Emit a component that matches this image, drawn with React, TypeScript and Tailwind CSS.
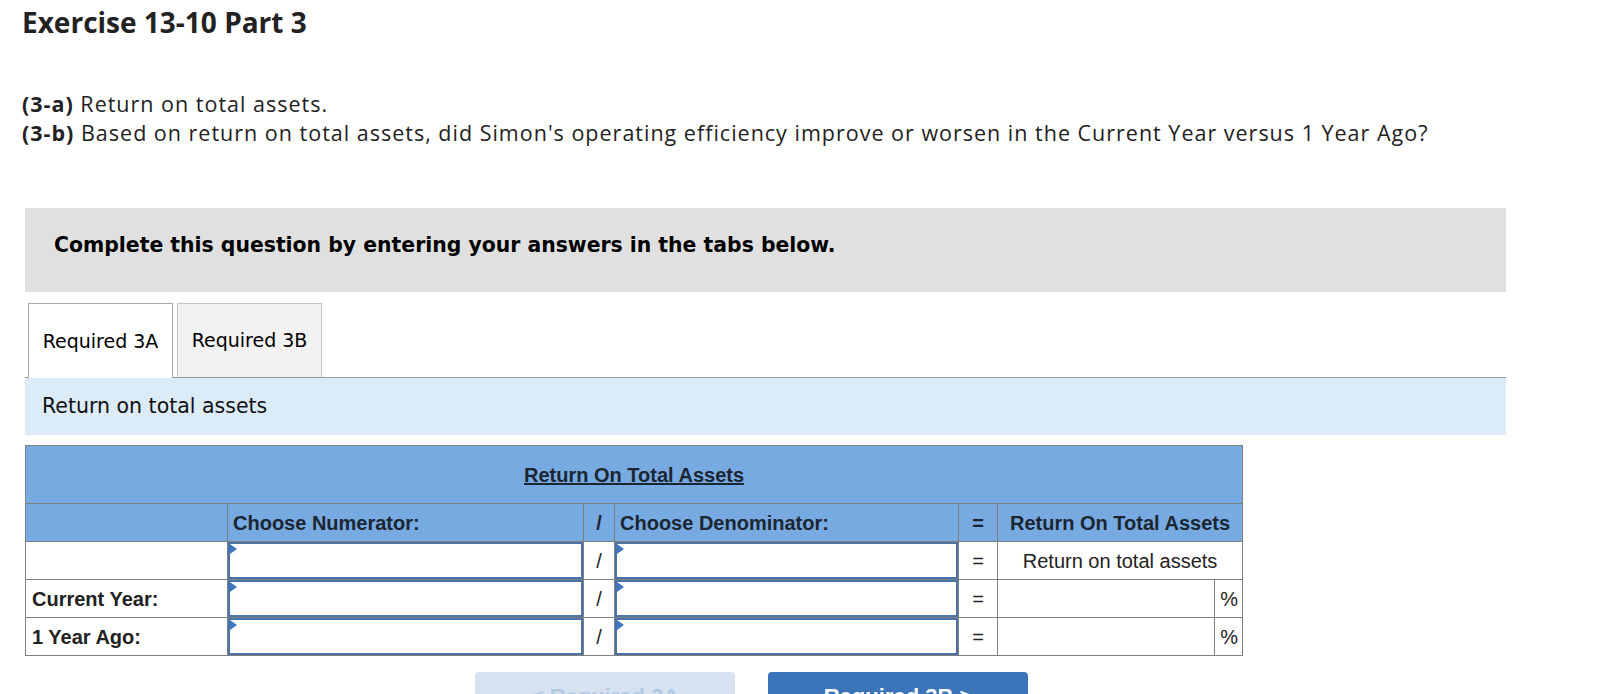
import React from 'react';

const sans = { fontFamily: '"Open Sans", Lato, sans-serif' };

function InputCell() {
  return (
    <td className="p-0 border border-[#7f7f7f]">
      <div className="relative h-[37px] border-2 border-[#4a74a9] bg-white">
        <span className="absolute left-0 top-0 w-0 h-0 border-t-[5px] border-b-[5px] border-l-[7px] border-t-transparent border-b-transparent border-l-[#3d77c2]" />
      </div>
    </td>
  );
}

function DataRow({ label }: { label: string }) {
  return (
    <tr className="h-[37px]">
      <td className="border border-[#7f7f7f] bg-white px-[6px] font-bold text-[#222]">{label}</td>
      <InputCell />
      <td className="border border-[#7f7f7f] bg-white text-center">/</td>
      <InputCell />
      <td className="border border-[#7f7f7f] bg-white text-center">=</td>
      <td className="border border-[#7f7f7f] bg-white" />
      <td className="border border-[#7f7f7f] bg-white text-right pr-[4px]">%</td>
    </tr>
  );
}

export default function App() {
  return (
    <div className="w-[1622px] h-[694px] overflow-hidden bg-white text-[#222]">
      <h1 className="pl-[22px] pt-[5px] text-[28px] leading-[34px] font-bold" style={sans}>
        Exercise 13-10 Part 3
      </h1>

      <div className="pl-[22px] mt-[50px] text-[21.5px] leading-[29px] tracking-[1px]" style={sans}>
        <p>
          <b>(3-a)</b> Return on total assets.
        </p>
        <p>
          <b>(3-b)</b> Based on return on total assets, did Simon's operating efficiency improve or worsen in the Current Year versus 1 Year Ago?
        </p>
      </div>

      <div className="ml-[25px] w-[1481px]" style={{ fontFamily: '"DejaVu Sans", Verdana, sans-serif' }}>
        <div className="mt-[61px] h-[84px] bg-[#e0e0e0] pl-[29px] pt-[22px] text-[20.4px] font-bold text-black">
          Complete this question by entering your answers in the tabs below.
        </div>

        <div className="mt-[12px] flex items-end h-[74px] border-b border-[#999]">
          <div className="ml-[3px] h-[75px] -mb-px w-[145px] flex items-center justify-center bg-white border border-b-0 border-[#aaa] text-[19px] text-black">
            Required 3A
          </div>
          <div className="ml-[4px] h-[74px] w-[145px] flex items-center justify-center bg-[#f2f2f2] border border-b-0 border-[#c4c4c4] text-[19px] text-black">
            Required 3B
          </div>
        </div>

        <div className="h-[57px] bg-[#dbebf8] pl-[17px] flex items-center text-[20.5px] text-[#111]">
          Return on total assets
        </div>
      </div>

      <table
        className="ml-[25px] mt-[10px] border-collapse text-[20px] text-[#222] table-fixed w-[1217px]"
        style={{ fontFamily: '"Liberation Sans", Arial, sans-serif' }}
      >
        <colgroup>
          <col className="w-[202px]" />
          <col className="w-[356px]" />
          <col className="w-[31px]" />
          <col className="w-[344px]" />
          <col className="w-[39px]" />
          <col className="w-[217px]" />
          <col className="w-[28px]" />
        </colgroup>
        <tbody>
          <tr className="h-[58px] bg-[#78aae2]">
            <td colSpan={7} className="border border-[#7f7f7f] text-center font-bold underline text-[#1b2631]">
              Return On Total Assets
            </td>
          </tr>
          <tr className="h-[38px] bg-[#78aae2] font-bold text-[#1b2631]">
            <td className="border border-[#7f7f7f]" />
            <td className="border border-[#7f7f7f] px-[5px]">Choose Numerator:</td>
            <td className="border border-[#7f7f7f] text-center">/</td>
            <td className="border border-[#7f7f7f] px-[5px]">Choose Denominator:</td>
            <td className="border border-[#7f7f7f] text-center">=</td>
            <td colSpan={2} className="border border-[#7f7f7f] text-center">Return On Total Assets</td>
          </tr>
          <tr className="h-[37px]">
            <td className="border border-[#7f7f7f] bg-white" />
            <InputCell />
            <td className="border border-[#7f7f7f] bg-white text-center">/</td>
            <InputCell />
            <td className="border border-[#7f7f7f] bg-white text-center">=</td>
            <td colSpan={2} className="border border-[#7f7f7f] bg-white text-center">Return on total assets</td>
          </tr>
          <DataRow label="Current Year:" />
          <DataRow label="1 Year Ago:" />
        </tbody>
      </table>

      <div className="mt-[16px] ml-[475px] flex gap-[33px] font-bold text-[22px]" style={{ fontFamily: '"Liberation Sans", Arial, sans-serif' }}>
        <button className="w-[260px] h-[48px] rounded-[4px] bg-[#d6e2f0] text-[#b3c9e3]">&lt; Required 3A</button>
        <button className="w-[260px] h-[48px] rounded-[4px] bg-[#3b74b9] text-white">Required 3B &gt;</button>
      </div>
    </div>
  );
}
